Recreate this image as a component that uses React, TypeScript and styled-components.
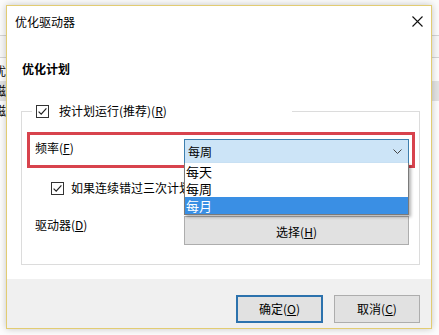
import React from "react";
import styled, { createGlobalStyle } from "styled-components";

const Global = createGlobalStyle`
  html, body { margin: 0; padding: 0; }
  body {
    width: 439px; height: 335px; overflow: hidden; background: #fcfcfc;
    font-family: "Noto Sans CJK SC", "Microsoft YaHei", sans-serif;
    font-size: 12px; color: #000;
  }
`;

const Desktop = styled.div`
  position: relative;
  width: 439px;
  height: 335px;
  overflow: hidden;
`;

const BgHeader = styled.div`
  height: 35px;
  background: #fbfbfb;
  border-bottom: 1px solid #d4d4d4;
`;

const BgSub = styled.div`
  height: 21px;
  background: #f7f7f7;
  border-bottom: 1px solid #d4d4d4;
  margin-bottom: 3px;
`;

const BgRow = styled.div<{ $sel?: boolean }>`
  height: 20px;
  line-height: 20px;
  margin-left: -6px;
  white-space: nowrap;
  background: ${(p) => (p.$sel ? "#e2e2e2" : "transparent")};
`;

const Dialog = styled.div`
  position: absolute;
  left: 6px;
  top: 5px;
  width: 426px;
  height: 324px;
  box-sizing: border-box;
  border: 1px solid #e2cc72;
  background: #fff;
  box-shadow: 0 0 7px rgba(0, 0, 0, 0.22);
  display: flex;
  flex-direction: column;
`;

const TitleBar = styled.div`
  height: 31px;
  flex: none;
  display: flex;
  align-items: center;
  justify-content: space-between;
  padding: 0 8px;
  line-height: 16px;
`;

const Body = styled.div`
  flex: 1;
  padding: 24px 11px 13px 14px;
  display: flex;
  flex-direction: column;
`;

const Heading = styled.div`
  font-weight: bold;
  line-height: 16px;
  margin-left: 1px;
`;

const Group = styled.fieldset`
  margin: 25px 0 0;
  padding: 0 0 19px;
  border: 1px solid #dcdcdc;
  min-width: 0;
`;

const Legend = styled.legend`
  margin-left: 10px;
  padding: 0 4px;
  width: 260px;
  box-sizing: border-box;
  height: 18px;
  display: flex;
  align-items: center;
  gap: 10px;
  line-height: 18px;
`;

const RedRow = styled.div`
  margin: 12px 4px 0 5px;
  border: 3px solid #d8434d;
  padding: 4px 3px 1px 5px;
  display: flex;
  align-items: flex-start;
`;

const FieldLabel = styled.div`
  width: 149px;
  flex: none;
  line-height: 18px;
`;

const Combo = styled.div`
  position: relative;
  width: 225px;
  height: 25px;
  box-sizing: border-box;
  background: #cce4f7;
  border: 1px solid #3d7fae;
  display: flex;
  align-items: center;
  justify-content: space-between;
  padding: 0 6px 0 3px;
  line-height: 16px;
`;

const DropList = styled.div`
  position: absolute;
  left: -1px;
  top: 100%;
  width: 225px;
  box-sizing: border-box;
  background: #fff;
  border: 1px solid #7a7a7a;
  border-top: none;
  box-shadow: 2px 2px 3px rgba(0, 0, 0, 0.3);
  z-index: 5;
`;

const DropItem = styled.div<{ $sel?: boolean }>`
  height: 17px;
  line-height: 17px;
  padding-left: 1px;
  background: ${(p) => (p.$sel ? "#3a8fe4" : "#fff")};
  color: ${(p) => (p.$sel ? "#fff" : "#000")};
  font-size: 13px;
`;

const CheckRow = styled.div`
  margin-top: 11px;
  padding-left: 29px;
  height: 18px;
  display: flex;
  align-items: center;
  gap: 7px;
  line-height: 18px;
  white-space: nowrap;
  overflow: hidden;
`;

const DriveRow = styled.div`
  margin-top: 19px;
  padding-left: 13px;
  display: flex;
  align-items: flex-start;
`;

const WideButton = styled.div`
  width: 225px;
  height: 29px;
  box-sizing: border-box;
  background: #e1e1e1;
  border: 1px solid #adadad;
  display: flex;
  align-items: center;
  justify-content: center;
  padding-top: 1px;
`;

const Footer = styled.div`
  height: 49px;
  flex: none;
  background: #f0f0f0;
  display: flex;
  justify-content: flex-end;
  align-items: flex-start;
  gap: 11px;
  padding: 16px 11px 0 0;
  box-sizing: border-box;
`;

const Button = styled.div<{ $primary?: boolean }>`
  width: ${(p) => (p.$primary ? 87 : 86)}px;
  height: 28px;
  box-sizing: border-box;
  background: #e1e1e1;
  border: ${(p) => (p.$primary ? "2px solid #2c72ad" : "1px solid #adadad")};
  display: flex;
  align-items: center;
  justify-content: center;
  line-height: 16px;
`;

const Check = () => (
  <svg width="13" height="13" viewBox="0 0 13 13" style={{ flex: "none" }}>
    <rect x="0.5" y="0.5" width="12" height="12" fill="#fff" stroke="#333" />
    <path d="M2.6 6.6 L5.2 9.2 L10.4 3.4" fill="none" stroke="#222" strokeWidth="1.2" />
  </svg>
);

const Chevron = () => (
  <svg width="9" height="5" viewBox="0 0 9 5">
    <path d="M0.5 0.5 L4.5 4.5 L8.5 0.5" fill="none" stroke="#444" strokeWidth="1" />
  </svg>
);

const CloseIcon = () => (
  <svg width="11" height="11" viewBox="0 0 11 11">
    <path d="M0.5 0.5 L10.5 10.5 M10.5 0.5 L0.5 10.5" stroke="#111" strokeWidth="1.1" />
  </svg>
);

export default function App() {
  return (
    <Desktop>
      <Global />
      <BgHeader />
      <BgSub />
      <BgRow>优化</BgRow>
      <BgRow $sel>磁盘</BgRow>
      <BgRow>磁盘</BgRow>
      <Dialog>
        <TitleBar>
          <span>优化驱动器</span>
          <CloseIcon />
        </TitleBar>
        <Body>
          <Heading>优化计划</Heading>
          <Group>
            <Legend>
              <Check />
              <span>
                按计划运行(推荐)(<u>R</u>)
              </span>
            </Legend>
            <RedRow>
              <FieldLabel>
                频率(<u>F</u>)
              </FieldLabel>
              <Combo>
                <span>每周</span>
                <Chevron />
                <DropList>
                  <DropItem>每天</DropItem>
                  <DropItem>每周</DropItem>
                  <DropItem $sel>每月</DropItem>
                </DropList>
              </Combo>
            </RedRow>
            <CheckRow>
              <Check />
              <span>如果连续错过三次计划的运行，则增加任务优先级(I)</span>
            </CheckRow>
            <DriveRow>
              <FieldLabel>
                驱动器(<u>D</u>)
              </FieldLabel>
              <WideButton>
                选择(<u>H</u>)
              </WideButton>
            </DriveRow>
          </Group>
        </Body>
        <Footer>
          <Button $primary>
            确定(<u>O</u>)
          </Button>
          <Button>
            取消(<u>C</u>)
          </Button>
        </Footer>
      </Dialog>
    </Desktop>
  );
}
